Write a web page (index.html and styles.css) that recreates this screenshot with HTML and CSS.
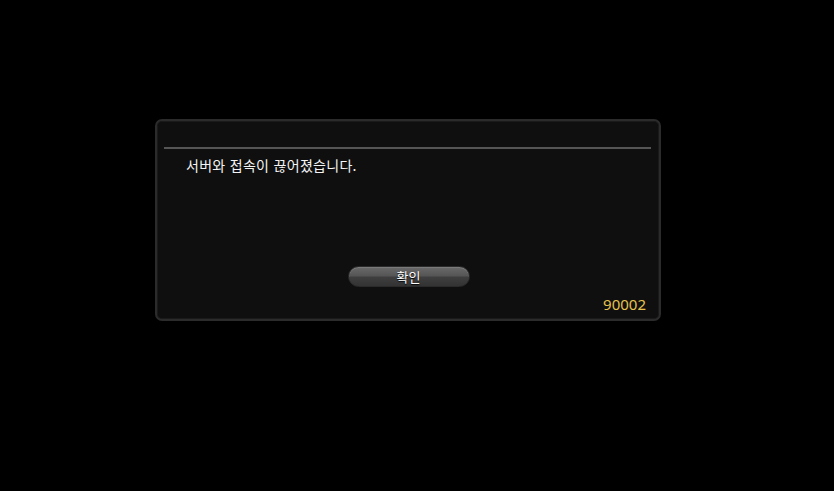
FILE: index.html
```html
<!DOCTYPE html>
<html lang="ko">
<head>
<meta charset="utf-8">
<link rel="stylesheet" href="styles.css">
</head>
<body>
<div class="stage">
  <div class="dialog">
    <div class="titlebar"></div>
    <div class="divider"></div>
    <p class="message">서버와 접속이 끊어졌습니다.</p>
    <div class="actions">
      <button class="btn">확인</button>
    </div>
    <div class="code">90002</div>
  </div>
</div>
</body>
</html>
```
FILE: styles.css
```css
html, body {
  margin: 0;
  padding: 0;
  background: #000;
  width: 834px;
  height: 491px;
  overflow: hidden;
}
.stage {
  padding: 119px 0 0 155px;
}
.dialog {
  box-sizing: border-box;
  width: 506px;
  height: 202px;
  background: #0f0f0f;
  border: 2px solid #2b2b2b;
  border-radius: 7px;
  box-shadow: inset 0 0 0 1px #1a1a1a;
  padding: 0 8px 0 7px;
  display: flex;
  flex-direction: column;
  font-family: "Noto Sans CJK KR", "Noto Sans", sans-serif;
}
.titlebar {
  height: 26px;
}
.divider {
  height: 2px;
  background: #555;
}
.message {
  margin: 6px 0 0 22px;
  color: #f4f4f4;
  font-size: 14px;
  line-height: 20px;
  letter-spacing: 0.3px;
}
.actions {
  display: flex;
  justify-content: center;
  margin-top: 91px;
  padding-left: 2px;
}
.btn {
  width: 122px;
  height: 21px;
  border-radius: 11px;
  border: 1px solid #2a2a2a;
  background: linear-gradient(#6a6a6a 0%, #565656 45%, #3e3e3e 55%, #333 100%);
  box-shadow: inset 0 1px 0 #7a7a7a;
  color: #fff;
  font-family: "Noto Sans CJK KR", sans-serif;
  font-size: 13px;
  line-height: 19px;
  padding: 0;
  text-shadow: 0 1px 1px #000;
}
.code {
  align-self: flex-end;
  margin: 7px 5px 0 0;
  color: #e6c14e;
  font-family: "Noto Sans", sans-serif;
  font-size: 15px;
  line-height: 20px;
}
```
